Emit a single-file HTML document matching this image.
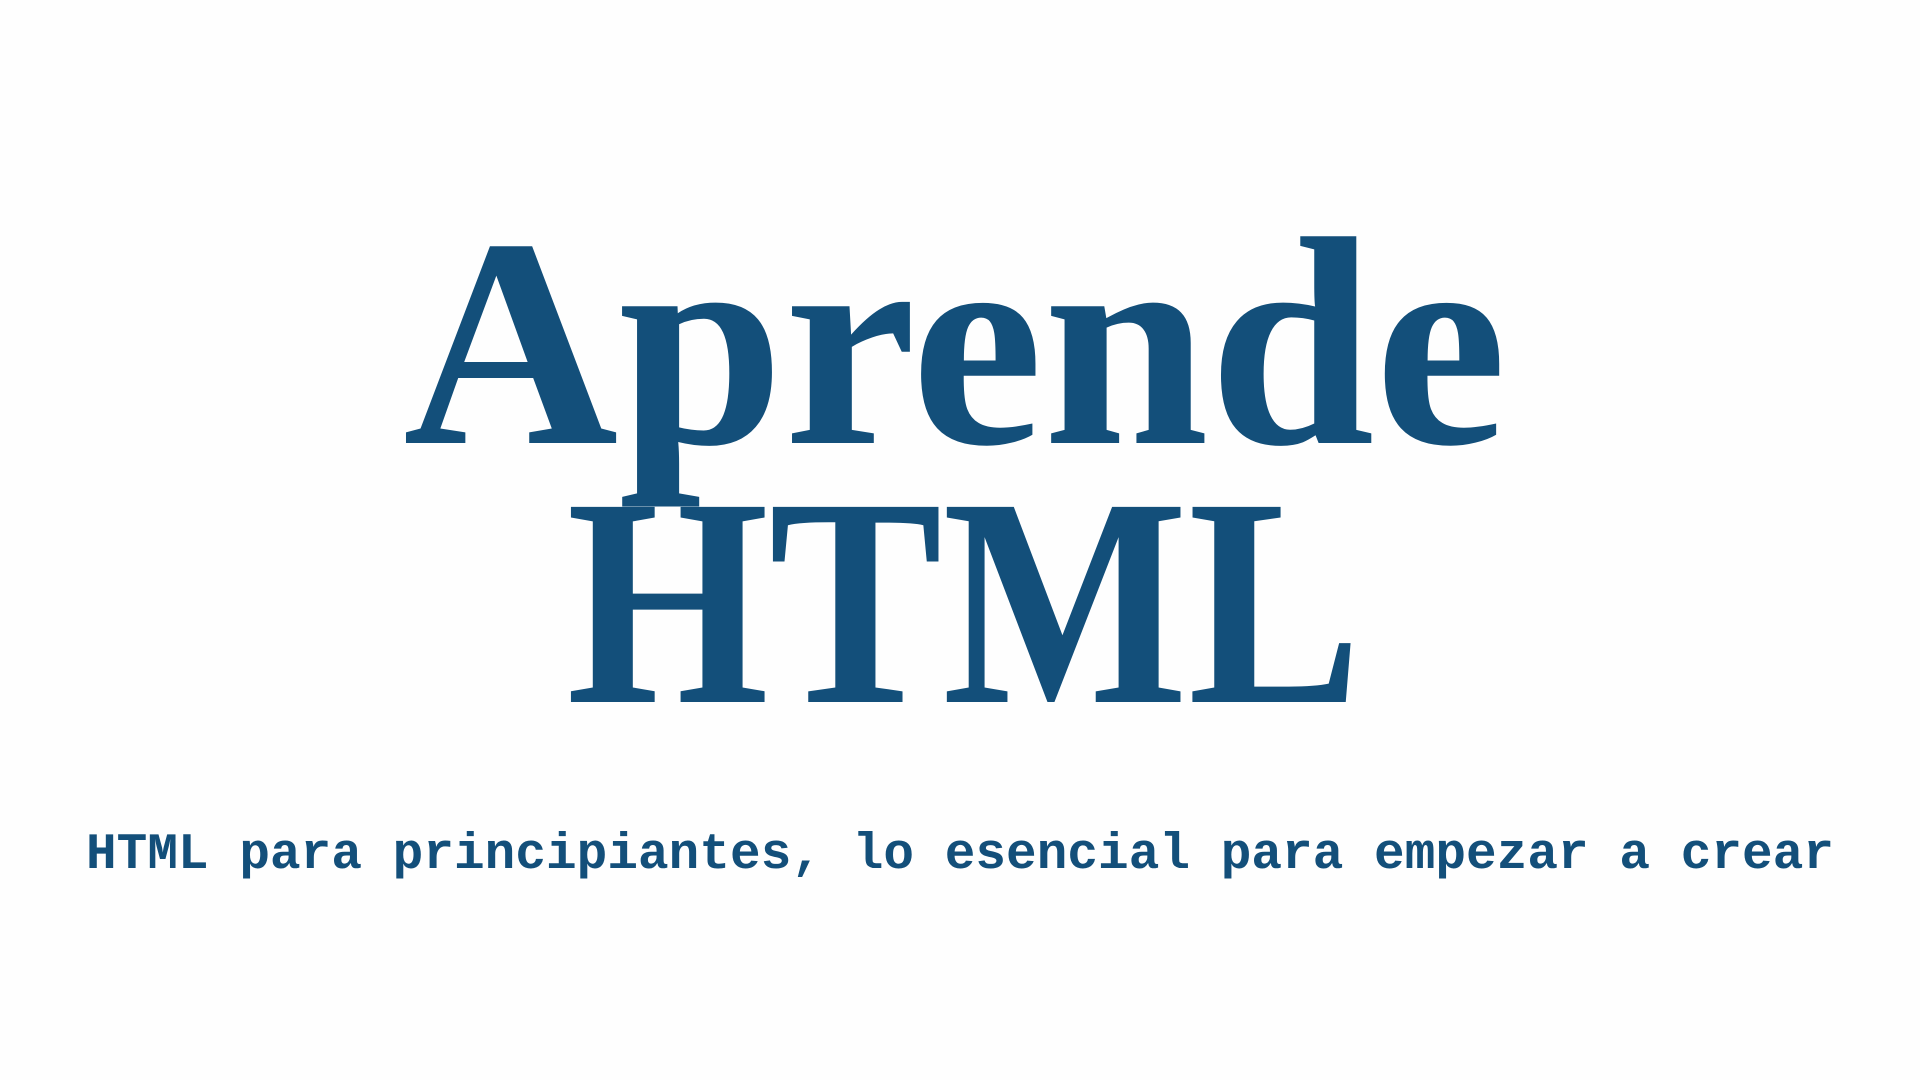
<!DOCTYPE html>
<html><head><meta charset="utf-8"><style>
html,body{margin:0;padding:0;background:#fefefe;width:1920px;height:1080px;overflow:hidden}
</style></head><body>
<svg width="1920" height="1080" xmlns="http://www.w3.org/2000/svg">
<g fill="#134f7a" text-anchor="middle">
<text x="955" y="443" font-family="Liberation Serif, serif" font-weight="bold" font-size="298">Aprende</text>
<text x="964" y="702" font-family="Liberation Serif, serif" font-weight="bold" font-size="298" textLength="795" lengthAdjust="spacingAndGlyphs">HTML</text>
<text x="960" y="868" font-family="Liberation Mono, monospace" font-weight="bold" font-size="51" textLength="1748" lengthAdjust="spacing">HTML para principiantes, lo esencial para empezar a crear</text>
</g>
</svg>
</body></html>
